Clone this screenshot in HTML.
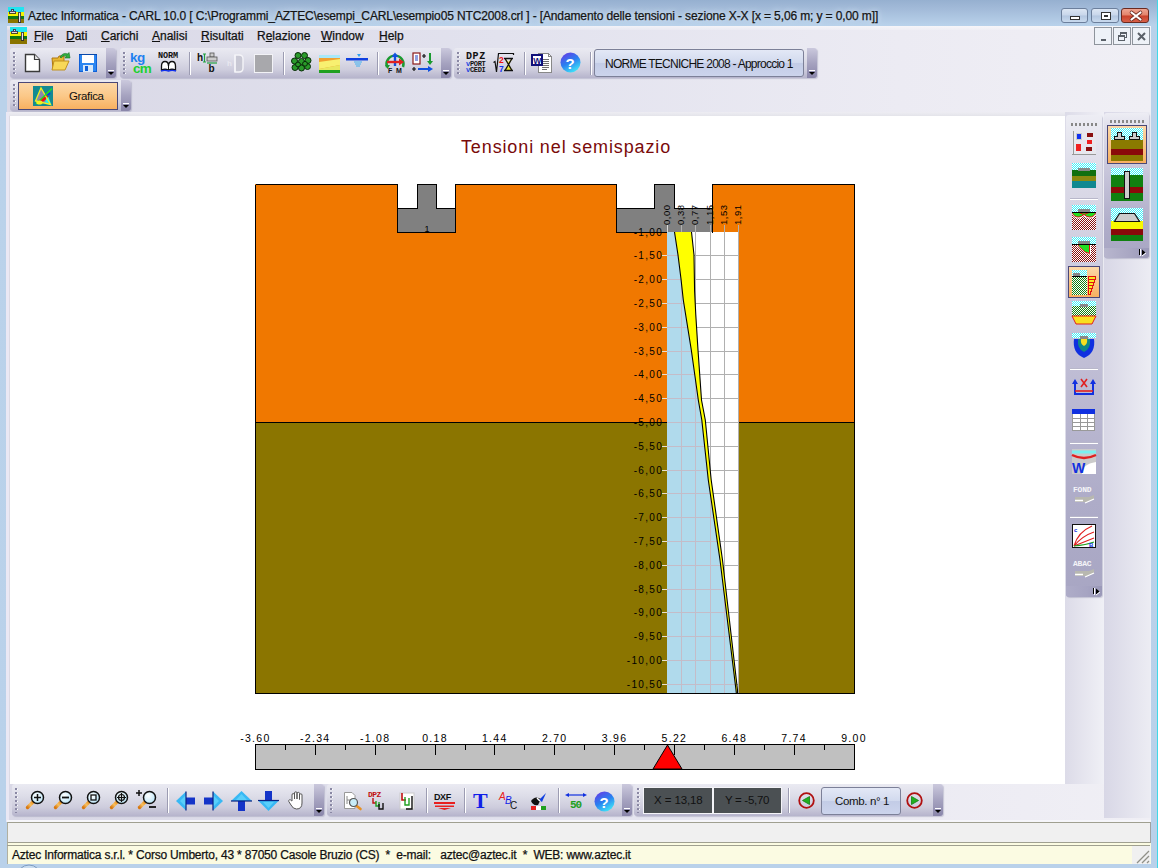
<!DOCTYPE html>
<html><head><meta charset="utf-8">
<style>
*{margin:0;padding:0;box-sizing:border-box}
html,body{width:1158px;height:868px;overflow:hidden;background:#B9D1EA;font-family:"Liberation Sans",sans-serif}
.a{position:absolute}
#frame{position:absolute;left:0;top:0;width:1158px;height:868px;background:linear-gradient(to bottom,#96B0D0 0px,#A4BCDA 10px,#B8D1EA 25px,#BAD2EA 100px,#B9D1EA 868px)}#frame:after{content:"";position:absolute;right:0;top:0;width:1px;height:868px;background:#40D8E8}
#client{position:absolute;left:7px;top:26px;width:1144px;height:838px;background:linear-gradient(to right,#D9D8E6 0%,#E2E2EE 43%,#ECEBF3 78%,#F0EFF5 100%)}
.tb{position:absolute;border-radius:3px;background:linear-gradient(to bottom,#EAEAF2 0%,#DEDEE9 35%,#CECDDD 72%,#B6B4CC 100%);box-shadow:1px 1px 1px rgba(130,130,160,.35)}
.cap{position:absolute;top:0;bottom:0;width:10px;right:0;border-radius:0 3px 3px 0;background:linear-gradient(to bottom,#CBC9DD 0%,#A6A3C0 50%,#8A86AA 100%)}
.cap i{position:absolute;left:2px;bottom:7px;width:6px;height:1px;background:#fff}
.cap b{position:absolute;left:2px;bottom:3px;width:0;height:0;border-left:3px solid transparent;border-right:3px solid transparent;border-top:3px solid #000}
.grip{position:absolute;left:3px;top:4px;width:3px;bottom:3px;background:repeating-linear-gradient(to bottom,#8A88A4 0 2px,transparent 2px 4px) 0 0/2px 100% no-repeat}.grip:after{content:"";position:absolute;left:2px;top:1px;width:1px;bottom:0;background:repeating-linear-gradient(to bottom,#fff 0 1px,transparent 1px 4px)}
.sep{position:absolute;top:4px;bottom:3px;width:2px;background:linear-gradient(to right,#9C9CB2 0 1px,#fff 1px 2px)}
.t{position:absolute;white-space:nowrap;line-height:1}
svg{position:absolute;overflow:visible}
.mn{position:absolute;top:30px;font-size:12px;color:#111;white-space:nowrap;line-height:1;-webkit-text-stroke:0.25px #111}
.mn u{text-decoration:underline;text-underline-offset:1px}
.btn{position:absolute;border:1px solid #7C8098;border-radius:3px;background:linear-gradient(to bottom,#E3E8F6 0%,#D2DAEE 48%,#C3CCE6 52%,#CCD4EC 100%)}
</style></head>
<body>
<div id="frame"></div>
<!-- title icon -->
<svg style="left:8px;top:7px" width="16" height="16" viewBox="0 0 16 16" shape-rendering="crispEdges"><rect x="0" y="0" width="16" height="5" fill="#22E4F0"/><rect x="0" y="5" width="16" height="4" fill="#F4F400"/><rect x="0" y="9" width="16" height="3" fill="#107810"/><rect x="0" y="12" width="16" height="4" fill="#8A7400"/><rect x="3" y="2" width="2" height="2" fill="#E8D8E0" stroke="#223" stroke-width=".8"/><rect x="1.5" y="4" width="6" height="2" fill="#E8D8E0" stroke="#223" stroke-width=".8"/><rect x="10.5" y="5" width="2" height="10" fill="#E8E0F0" stroke="#223" stroke-width=".8"/></svg>
<div class="t" style="left:28px;top:10px;font-size:12px;letter-spacing:-0.12px;color:#151515;-webkit-text-stroke:0.25px #151515;text-shadow:0 0 5px #D8E6F4,0 0 8px #D0E0F2">Aztec Informatica - CARL 10.0 [ C:\Programmi_AZTEC\esempi_CARL\esempio05 NTC2008.crl ] - [Andamento delle tensioni - sezione X-X [x = 5,06 m; y = 0,00 m]]</div>
<!-- caption buttons -->
<div class="a" style="left:1061px;top:8px;width:27px;height:15px;border:1px solid #6C7F9C;border-radius:3px;background:linear-gradient(to bottom,#DCE6F4 0%,#C8D6EA 48%,#B3C6E0 52%,#C9DAEE 100%)"><div class="a" style="left:8px;top:7px;width:10px;height:4px;background:#fff;border:1px solid #333"></div></div>
<div class="a" style="left:1091px;top:8px;width:28px;height:15px;border:1px solid #6C7F9C;border-radius:3px;background:linear-gradient(to bottom,#DCE6F4 0%,#C8D6EA 48%,#B3C6E0 52%,#C9DAEE 100%)"><div class="a" style="left:9px;top:3px;width:10px;height:8px;background:#fff;border:1px solid #333"><div class="a" style="left:2px;top:2px;width:4px;height:2px;background:#333"></div></div></div>
<div class="a" style="left:1121px;top:8px;width:28px;height:15px;border:1px solid #6A2A20;border-radius:3px;background:linear-gradient(to bottom,#EEA592 0%,#E3826A 48%,#C9412A 52%,#D8614A 100%)"><svg style="left:8px;top:2px" width="12" height="10" viewBox="0 0 12 10"><path d="M1.5 1.5 L10.5 8.5 M10.5 1.5 L1.5 8.5" stroke="#6b2a20" stroke-width="3.6" stroke-linecap="round"/><path d="M1.5 1.5 L10.5 8.5 M10.5 1.5 L1.5 8.5" stroke="#fff" stroke-width="2.2" stroke-linecap="round"/></svg></div>
<div id="client"></div>
<!-- menubar -->
<div class="a" style="left:7px;top:26px;width:1144px;height:4px;background:linear-gradient(to bottom,rgba(255,255,255,.5),rgba(255,255,255,.15))"></div>
<svg style="left:10px;top:27px" width="17" height="17" viewBox="0 0 17 17" shape-rendering="crispEdges"><rect x="0" y="0" width="17" height="5" fill="#22E4F0"/><rect x="0" y="5" width="17" height="4" fill="#F4F400"/><rect x="0" y="9" width="17" height="3" fill="#107810"/><rect x="0" y="12" width="17" height="5" fill="#8A7400"/><rect x="3.5" y="2" width="2" height="2" fill="#E8D8E0" stroke="#223" stroke-width=".8"/><rect x="1" y="4" width="6" height="2" fill="#E8D8E0" stroke="#223" stroke-width=".8"/><rect x="11" y="5" width="2" height="8" fill="#E8E0F0" stroke="#223" stroke-width=".8"/></svg>
<div class="mn" style="left:34px"><u>F</u>ile</div>
<div class="mn" style="left:66px"><u>D</u>ati</div>
<div class="mn" style="left:101px"><u>C</u>arichi</div>
<div class="mn" style="left:152px"><u>A</u>nalisi</div>
<div class="mn" style="left:201px"><u>R</u>isultati</div>
<div class="mn" style="left:257px">R<u>e</u>lazione</div>
<div class="mn" style="left:321px"><u>W</u>indow</div>
<div class="mn" style="left:379px"><u>H</u>elp</div>
<!-- MDI buttons -->
<div class="a" style="left:1094px;top:27px;width:18px;height:18px;border:1px solid #8E949C;background:#EEF2F8"><div class="a" style="left:6px;top:11px;width:5px;height:2px;background:#5A6068"></div></div>
<div class="a" style="left:1113px;top:27px;width:18px;height:18px;border:1px solid #8E949C;background:#EEF2F8"><div class="a" style="left:6px;top:4px;width:7px;height:6px;border:1px solid #5A6068;border-top-width:2px"></div><div class="a" style="left:4px;top:7px;width:7px;height:6px;border:1px solid #5A6068;border-top-width:2px;background:#EEF2F8"></div></div>
<div class="a" style="left:1132px;top:27px;width:18px;height:18px;border:1px solid #8E949C;background:#EEF2F8"><svg style="left:4px;top:4px" width="9" height="9" viewBox="0 0 9 9"><path d="M1 1L8 8M8 1L1 8" stroke="#5A6068" stroke-width="2"/></svg></div>
<!-- toolbar 1a -->
<div class="tb" style="left:10px;top:48px;width:106px;height:30px"><div class="grip"></div><div class="cap"><i></i><b></b></div></div>
<svg style="left:24px;top:53px" width="17" height="20" viewBox="0 0 17 20"><path d="M1.5 1.5H10.5L15.5 6.5V18.5H1.5Z" fill="#fff" stroke="#3a3a3a" stroke-width="1.4"/><path d="M10.5 1.5V6.5H15.5" fill="#e8e8e8" stroke="#3a3a3a" stroke-width="1.2"/></svg>
<svg style="left:51px;top:52px" width="20" height="20" viewBox="0 0 20 20"><path d="M1 6H7L8 4H13V17H2Z" fill="#E8B830" stroke="#B07810" stroke-width="1"/><path d="M3 9H18L14 18H1Z" fill="#F8D858" stroke="#C09020" stroke-width="1"/><path d="M9 5Q12 0 17 2L18 0.5L19 6L14 6L15.5 4Q12 3 10 6Z" fill="#30B040" stroke="#107020" stroke-width=".6"/></svg>
<svg style="left:79px;top:54px" width="18" height="18" viewBox="0 0 18 18" shape-rendering="crispEdges"><rect x="0" y="0" width="18" height="18" fill="#1060D8"/><rect x="1" y="1" width="16" height="16" fill="#2C86F0"/><rect x="3" y="1" width="12" height="8" fill="#fff"/><rect x="4" y="11" width="10" height="7" fill="#D8E8F8"/><rect x="6" y="12" width="3" height="5" fill="#1060D8"/><rect x="0" y="0" width="18" height="1" fill="#0A48A8"/></svg>
<!-- toolbar 1b -->
<div class="tb" style="left:120px;top:48px;width:331px;height:30px"><div class="grip"></div><div class="sep" style="left:69px"></div><div class="sep" style="left:163px"></div><div class="sep" style="left:257px"></div><div class="cap"><i></i><b></b></div></div>
<div class="t" style="left:130px;top:51px;font-size:13.5px;font-weight:bold;color:#1E80F0;letter-spacing:-.6px">kg</div>
<div class="t" style="left:133px;top:62px;font-size:13.5px;font-weight:bold;color:#20D030;letter-spacing:-.8px">cm</div>
<div class="t" style="left:158px;top:52px;font-family:'Liberation Mono';font-weight:bold;font-size:8.5px;color:#111;letter-spacing:-.1px">NORM</div>
<svg style="left:160px;top:60px" width="17" height="12" viewBox="0 0 17 12"><path d="M1.5 10V6Q1.5 1.5 5 1.5Q8.5 1.5 8.5 6Q8.5 1.5 12 1.5Q15.5 1.5 15.5 6V10Q12 8.5 8.5 10Q5 8.5 1.5 10Z" fill="#fff" stroke="#111" stroke-width="1.3"/><path d="M8.5 6V10" stroke="#111"/><path d="M1 11Q5 9.8 8.5 11Q12 9.8 16 11" stroke="#1030F0" stroke-width="1.4" fill="none"/></svg>
<svg style="left:197px;top:52px" width="21" height="21" viewBox="0 0 21 21"><text x="0" y="9" font-family="Liberation Sans" font-weight="bold" font-size="10" fill="#111">h</text><path d="M7.5 2V10M6 2H9M6 10H9" stroke="#20A040" stroke-width="1.2"/><rect x="13" y="1" width="4" height="4" fill="#ccc" stroke="#555" stroke-width=".8"/><rect x="10" y="5" width="10" height="4" fill="#ccc" stroke="#555" stroke-width=".8"/><path d="M10 11H20" stroke="#20A040" stroke-width="1.2"/><text x="11.5" y="20" font-family="Liberation Sans" font-weight="bold" font-size="10" fill="#111">b</text></svg>
<svg style="left:227px;top:53px" width="19" height="20" viewBox="0 0 19 20"><text x="0" y="13" font-family="Liberation Sans" font-weight="bold" font-size="8" fill="#e8e8f0">h</text><path d="M8 2H12Q16 2 16 6V15Q16 19 12 19H8Z" fill="#c8c8d4" stroke="#f4f4f8" stroke-width="1.4"/><path d="M8 2V19" stroke="#f4f4f8" stroke-width="1.4"/></svg>
<div class="a" style="left:254px;top:54px;width:19px;height:19px;background:#A8A8AC;border:1px solid #F2F2F6"></div>
<svg style="left:291px;top:52px" width="21" height="21" viewBox="0 0 21 21"><g fill="#2A9A2A" stroke="#062A06" stroke-width="1"><circle cx="7" cy="3.5" r="3"/><circle cx="13.5" cy="3.5" r="3"/><circle cx="3.5" cy="9" r="3"/><circle cx="10.5" cy="9.5" r="3"/><circle cx="17" cy="8.5" r="3"/><circle cx="4" cy="15.5" r="3"/><circle cx="10.5" cy="16" r="3"/><circle cx="16.5" cy="14.5" r="3"/><circle cx="7" cy="12.5" r="2.4"/><circle cx="14" cy="11.8" r="2.4"/></g></svg>
<svg style="left:319px;top:55px" width="21" height="18" viewBox="0 0 21 18" shape-rendering="crispEdges"><rect x="0" y="0" width="21" height="18" fill="#F0A030"/><rect x="0" y="0" width="21" height="3" fill="#A8E8F8"/><path d="M0 7L21 4V10L0 14Z" fill="#F8F070" shape-rendering="auto"/><path d="M0 14L21 10V15L0 15Z" fill="#E8E860" shape-rendering="auto"/><rect x="0" y="15" width="21" height="3" fill="#20A020"/></svg>
<svg style="left:346px;top:54px" width="22" height="14" viewBox="0 0 22 14"><path d="M11 0L15 0L13 3Z" fill="#30A0F0"/><rect x="0" y="4" width="22" height="2.5" fill="#1040E0"/><path d="M8 8H16M9 10H15M10 12H14" stroke="#40B0F0" stroke-width="1.2"/></svg>
<svg style="left:384px;top:52px" width="22" height="21" viewBox="0 0 22 21"><path d="M3 15A8.5 8.5 0 1 1 19 15" fill="none" stroke="#1A9A30" stroke-width="2.4"/><path d="M1 13L3.5 17L6 13" fill="#1A9A30"/><path d="M11 2V14" stroke="#1050E0" stroke-width="2.4"/><path d="M7.5 5L11 0.5L14.5 5Z" fill="#1050E0"/><path d="M3 10H16" stroke="#E02020" stroke-width="2.4"/><path d="M15 6.5L20 10L15 13.5Z" fill="#E02020"/><text x="4" y="21" font-family="Liberation Sans" font-weight="bold" font-size="7" fill="#111">F</text><text x="12" y="21" font-family="Liberation Sans" font-weight="bold" font-size="7" fill="#111">M</text></svg>
<svg style="left:412px;top:52px" width="22" height="21" viewBox="0 0 22 21"><rect x="1" y="1" width="7" height="11" fill="#fff" stroke="#8A1A1A" stroke-width="1.2"/><path d="M3 4H6M3 6H6M3 8H6" stroke="#2040C0"/><path d="M10 4H14M12 2V6" stroke="#111" stroke-width="1.2"/><path d="M18 1V11" stroke="#1A9A30" stroke-width="2"/><path d="M15 9L18 13L21 9Z" fill="#1A9A30"/><path d="M0 17H4M2 15V19" stroke="#111" stroke-width="1.2"/><path d="M6 17H17" stroke="#1050E0" stroke-width="2"/><path d="M16 14L21 17L16 20Z" fill="#1050E0"/></svg>
<!-- toolbar 1c -->
<div class="tb" style="left:454px;top:48px;width:363px;height:30px"><div class="grip"></div><div class="sep" style="left:70px"></div><div class="sep" style="left:136px"></div><div class="cap"><i></i><b></b></div></div>
<div class="t" style="left:466px;top:52px;font-family:'Liberation Mono';font-weight:bold;font-size:10px;color:#111;letter-spacing:.6px">DPZ</div>
<div class="t" style="left:466px;top:61px;font-family:'Liberation Mono';font-weight:bold;font-size:7px;color:#111;letter-spacing:-.3px"><span style="color:#2040E0">v</span>PORT</div>
<div class="t" style="left:466px;top:67px;font-family:'Liberation Mono';font-weight:bold;font-size:7px;color:#111;letter-spacing:-.3px"><span style="color:#2040E0">v</span>CEDI</div>
<svg style="left:493px;top:52px" width="22" height="21" viewBox="0 0 22 21"><path d="M0.5 10.5L2 9.5L3.5 20L5.5 1.5H20.5V3" fill="none" stroke="#111" stroke-width="1.2"/><text x="6" y="11" font-family="Liberation Sans" font-weight="bold" font-size="8.5" fill="#F01010">2</text><text x="6" y="19.5" font-family="Liberation Sans" font-weight="bold" font-size="8.5" fill="#1030F0">7</text><path d="M11.5 6.5H19.5L16 12.5L19.5 18.5H11.5L15 12.5Z" fill="#F0E830"/><path d="M12.5 6.5H18.5L15.5 10Z" fill="#E0E0E8"/><path d="M11 6.5H20M11 18.5H20M12 6.5L19 18.5M19 6.5L12 18.5" stroke="#111" stroke-width="1.3"/></svg>
<svg style="left:531px;top:52px" width="22" height="21" viewBox="0 0 22 21" shape-rendering="crispEdges"><path d="M7.5 1.5H17.5L20.5 4.5V20.5H7.5Z" fill="#fff" stroke="#888" stroke-width="1"/><path d="M17.5 1.5V4.5H20.5" fill="none" stroke="#888"/><path d="M11 7.5H18M11 9.5H18M11 11.5H18M11 13.5H18M11 15.5H18M11 17.5H16" stroke="#707070"/><rect x="1" y="3" width="10" height="10" fill="#fff" stroke="#10107A" stroke-width="1.6"/><text x="2.2" y="11.5" font-family="Liberation Sans" font-weight="bold" font-size="8.5" fill="#10107A" shape-rendering="auto">W</text></svg>
<svg style="left:560px;top:52px" width="21" height="21" viewBox="0 0 21 21"><defs><linearGradient id="hg" x1=".2" y1=".1" x2=".7" y2="1"><stop offset="0" stop-color="#5A48E8"/><stop offset=".45" stop-color="#2A80F0"/><stop offset="1" stop-color="#40E8F8"/></linearGradient></defs><circle cx="10.5" cy="10.5" r="10" fill="url(#hg)"/><text x="5.5" y="16.5" font-family="Liberation Sans" font-weight="bold" font-size="15" fill="#fff">?</text></svg>
<div class="btn" style="left:594px;top:49px;width:210px;height:28px"></div>
<div class="t" style="left:605px;top:58px;font-size:12px;letter-spacing:-0.75px;color:#111">NORME TECNICHE 2008 - Approccio 1</div>
<!-- toolbar 2 -->
<div class="tb" style="left:10px;top:80px;width:121px;height:31px"><div class="grip"></div><div class="cap"><i></i><b></b></div></div>
<div class="a" style="left:18px;top:82px;width:100px;height:28px;border:1px solid #4A4878;background:linear-gradient(to bottom,#FCD8A8 0%,#FBC888 50%,#F8B060 100%)"></div>
<svg style="left:33px;top:86px" width="20" height="20" viewBox="0 0 20 20"><rect x="0" y="0" width="20" height="20" fill="#138A92"/><path d="M8 2L2.5 15L17.5 18.5Z" fill="#8A88AC"/><path d="M5 15L13.5 9L15.5 11.5L9 16.5Z" fill="#F01010"/><path d="M13.5 12L15.5 11L18 18L12 17Z" fill="#20F0F0"/><path d="M8 2L2.5 15L17.5 18.5Z" fill="none" stroke="#F0F020" stroke-width="1.3"/><path d="M3 18L19 2.5" stroke="#20E020" stroke-width="1.4"/><path d="M14 8.5L17 6.5L17.5 8L15 9.5Z" fill="#1030F0"/><ellipse cx="6.5" cy="16.5" rx="3.2" ry="2" fill="#F0F020"/></svg>
<div class="t" style="left:69px;top:91px;font-size:11.5px;letter-spacing:-0.35px;color:#111">Grafica</div>
<div class="a" style="left:10px;top:116px;width:1055px;height:668px;background:#fff"></div>
<div class="a" style="left:9px;top:112px;width:1056px;height:4px;background:linear-gradient(to bottom,#EEEDF3,#E4E4EA)"></div>
<div class="a" style="left:6px;top:112px;width:3px;height:710px;background:#EAE8F4"></div>
<div class="a" style="left:9px;top:116px;width:1px;height:668px;background:#DCDAE4"></div>
<div class="t" style="left:461px;top:138px;font-size:18px;color:#7A0A0A;letter-spacing:0.87px">Tensioni nel semispazio</div>
<svg style="left:0;top:0" width="1158" height="868" viewBox="0 0 1158 868"><rect x="255" y="184" width="600" height="238" fill="#F07800"/><rect x="255" y="422" width="600" height="272" fill="#8B7500"/><rect x="397" y="184" width="58" height="48" fill="#fff"/><path d="M397 208H417V184H436V208H455V232H397Z" fill="#808080"/><rect x="616" y="184" width="96" height="48" fill="#fff"/><path d="M616 208H654V184H674V208H712V232H616Z" fill="#808080"/><rect x="667" y="232" width="72" height="462" fill="#fff"/><line x1="681.5" y1="225" x2="681.5" y2="694" stroke="#B0B0B0" stroke-width="1"/><line x1="695.5" y1="225" x2="695.5" y2="694" stroke="#B0B0B0" stroke-width="1"/><line x1="710.5" y1="225" x2="710.5" y2="694" stroke="#B0B0B0" stroke-width="1"/><line x1="724.5" y1="225" x2="724.5" y2="694" stroke="#B0B0B0" stroke-width="1"/><line x1="738.5" y1="225" x2="738.5" y2="694" stroke="#B0B0B0" stroke-width="1"/><line x1="667.5" y1="225" x2="667.5" y2="232" stroke="#D8D8D8" stroke-width="1"/><line x1="662" y1="255.5" x2="667" y2="255.5" stroke="#E8E0D0" stroke-width="1"/><line x1="667" y1="255.5" x2="739" y2="255.5" stroke="#B0B0B0" stroke-width="1"/><line x1="662" y1="279.5" x2="667" y2="279.5" stroke="#E8E0D0" stroke-width="1"/><line x1="667" y1="279.5" x2="739" y2="279.5" stroke="#B0B0B0" stroke-width="1"/><line x1="662" y1="303.5" x2="667" y2="303.5" stroke="#E8E0D0" stroke-width="1"/><line x1="667" y1="303.5" x2="739" y2="303.5" stroke="#B0B0B0" stroke-width="1"/><line x1="662" y1="327.5" x2="667" y2="327.5" stroke="#E8E0D0" stroke-width="1"/><line x1="667" y1="327.5" x2="739" y2="327.5" stroke="#B0B0B0" stroke-width="1"/><line x1="662" y1="351.5" x2="667" y2="351.5" stroke="#E8E0D0" stroke-width="1"/><line x1="667" y1="351.5" x2="739" y2="351.5" stroke="#B0B0B0" stroke-width="1"/><line x1="662" y1="374.5" x2="667" y2="374.5" stroke="#E8E0D0" stroke-width="1"/><line x1="667" y1="374.5" x2="739" y2="374.5" stroke="#B0B0B0" stroke-width="1"/><line x1="662" y1="398.5" x2="667" y2="398.5" stroke="#E8E0D0" stroke-width="1"/><line x1="667" y1="398.5" x2="739" y2="398.5" stroke="#B0B0B0" stroke-width="1"/><line x1="662" y1="422.5" x2="667" y2="422.5" stroke="#E8E0D0" stroke-width="1"/><line x1="667" y1="422.5" x2="739" y2="422.5" stroke="#B0B0B0" stroke-width="1"/><line x1="662" y1="446.5" x2="667" y2="446.5" stroke="#E8E0D0" stroke-width="1"/><line x1="667" y1="446.5" x2="739" y2="446.5" stroke="#B0B0B0" stroke-width="1"/><line x1="662" y1="470.5" x2="667" y2="470.5" stroke="#E8E0D0" stroke-width="1"/><line x1="667" y1="470.5" x2="739" y2="470.5" stroke="#B0B0B0" stroke-width="1"/><line x1="662" y1="493.5" x2="667" y2="493.5" stroke="#E8E0D0" stroke-width="1"/><line x1="667" y1="493.5" x2="739" y2="493.5" stroke="#B0B0B0" stroke-width="1"/><line x1="662" y1="517.5" x2="667" y2="517.5" stroke="#E8E0D0" stroke-width="1"/><line x1="667" y1="517.5" x2="739" y2="517.5" stroke="#B0B0B0" stroke-width="1"/><line x1="662" y1="541.5" x2="667" y2="541.5" stroke="#E8E0D0" stroke-width="1"/><line x1="667" y1="541.5" x2="739" y2="541.5" stroke="#B0B0B0" stroke-width="1"/><line x1="662" y1="565.5" x2="667" y2="565.5" stroke="#E8E0D0" stroke-width="1"/><line x1="667" y1="565.5" x2="739" y2="565.5" stroke="#B0B0B0" stroke-width="1"/><line x1="662" y1="589.5" x2="667" y2="589.5" stroke="#E8E0D0" stroke-width="1"/><line x1="667" y1="589.5" x2="739" y2="589.5" stroke="#B0B0B0" stroke-width="1"/><line x1="662" y1="612.5" x2="667" y2="612.5" stroke="#E8E0D0" stroke-width="1"/><line x1="667" y1="612.5" x2="739" y2="612.5" stroke="#B0B0B0" stroke-width="1"/><line x1="662" y1="636.5" x2="667" y2="636.5" stroke="#E8E0D0" stroke-width="1"/><line x1="667" y1="636.5" x2="739" y2="636.5" stroke="#B0B0B0" stroke-width="1"/><line x1="662" y1="660.5" x2="667" y2="660.5" stroke="#E8E0D0" stroke-width="1"/><line x1="667" y1="660.5" x2="739" y2="660.5" stroke="#B0B0B0" stroke-width="1"/><line x1="662" y1="684.5" x2="667" y2="684.5" stroke="#E8E0D0" stroke-width="1"/><line x1="667" y1="684.5" x2="739" y2="684.5" stroke="#B0B0B0" stroke-width="1"/><polygon points="667,232 674.5,232 678,255 681,279 683.3,300 691.3,350 698.3,400 701.8,420 708.3,480 720,560 736,690 736.4,694 667,694" fill="#B0DAEC"/><polygon points="674.5,232 678,255 681,279 683.3,300 691.3,350 698.3,400 701.8,420 708.3,480 720,560 736,690 736.4,694 737.6,694 737.5,690 722.5,560 711.2,480 705.3,420 701.5,400 698,350 695.8,315 694.6,291 694,255 691.5,232" fill="#FFFF00"/><clipPath id="cb"><polygon points="667,232 674.5,232 678,255 681,279 683.3,300 691.3,350 698.3,400 701.8,420 708.3,480 720,560 736,690 736.4,694 667,694"/></clipPath><g clip-path="url(#cb)" stroke="#C4BCC8" stroke-width="1"><line x1="681.5" y1="232" x2="681.5" y2="694"/><line x1="695.5" y1="232" x2="695.5" y2="694"/><line x1="710.5" y1="232" x2="710.5" y2="694"/><line x1="724.5" y1="232" x2="724.5" y2="694"/><line x1="738.5" y1="232" x2="738.5" y2="694"/><line x1="667" y1="255.5" x2="739" y2="255.5"/><line x1="667" y1="279.5" x2="739" y2="279.5"/><line x1="667" y1="303.5" x2="739" y2="303.5"/><line x1="667" y1="327.5" x2="739" y2="327.5"/><line x1="667" y1="351.5" x2="739" y2="351.5"/><line x1="667" y1="374.5" x2="739" y2="374.5"/><line x1="667" y1="398.5" x2="739" y2="398.5"/><line x1="667" y1="422.5" x2="739" y2="422.5"/><line x1="667" y1="446.5" x2="739" y2="446.5"/><line x1="667" y1="470.5" x2="739" y2="470.5"/><line x1="667" y1="493.5" x2="739" y2="493.5"/><line x1="667" y1="517.5" x2="739" y2="517.5"/><line x1="667" y1="541.5" x2="739" y2="541.5"/><line x1="667" y1="565.5" x2="739" y2="565.5"/><line x1="667" y1="589.5" x2="739" y2="589.5"/><line x1="667" y1="612.5" x2="739" y2="612.5"/><line x1="667" y1="636.5" x2="739" y2="636.5"/><line x1="667" y1="660.5" x2="739" y2="660.5"/><line x1="667" y1="684.5" x2="739" y2="684.5"/></g><polyline points="674.5,232 678,255 681,279 683.3,300 691.3,350 698.3,400 701.8,420 708.3,480 720,560 736,690 736.4,694" fill="none" stroke="#000" stroke-width="1.1"/><polyline points="691.5,232 694,255 694.6,291 695.8,315 698,350 701.5,400 705.3,420 711.2,480 722.5,560 737.5,690 737.6,694" fill="none" stroke="#000" stroke-width="1.1"/><g fill="none" stroke="#000" stroke-width="1" shape-rendering="crispEdges"><path d="M255.5 184.5H397.5V232.5H455.5V184.5H616.5V232.5H667"/><path d="M712.5 232.5V184.5H854.5V693.5H255.5V184.5"/><path d="M397.5 208.5H417.5V184.5H436.5V208.5H455.5"/><path d="M616.5 208.5H654.5V184.5H674.5V208.5H712.5"/><path d="M255.5 422.5H667M739 422.5H854.5"/></g><text x="663" y="236" text-anchor="end" font-family="Liberation Sans" font-size="10" fill="#000" letter-spacing="1.3">-1,00</text><text x="663" y="259" text-anchor="end" font-family="Liberation Sans" font-size="10" fill="#000" letter-spacing="1.3">-1,50</text><text x="663" y="283" text-anchor="end" font-family="Liberation Sans" font-size="10" fill="#000" letter-spacing="1.3">-2,00</text><text x="663" y="307" text-anchor="end" font-family="Liberation Sans" font-size="10" fill="#000" letter-spacing="1.3">-2,50</text><text x="663" y="331" text-anchor="end" font-family="Liberation Sans" font-size="10" fill="#000" letter-spacing="1.3">-3,00</text><text x="663" y="355" text-anchor="end" font-family="Liberation Sans" font-size="10" fill="#000" letter-spacing="1.3">-3,50</text><text x="663" y="378" text-anchor="end" font-family="Liberation Sans" font-size="10" fill="#000" letter-spacing="1.3">-4,00</text><text x="663" y="402" text-anchor="end" font-family="Liberation Sans" font-size="10" fill="#000" letter-spacing="1.3">-4,50</text><text x="663" y="426" text-anchor="end" font-family="Liberation Sans" font-size="10" fill="#000" letter-spacing="1.3">-5,00</text><text x="663" y="450" text-anchor="end" font-family="Liberation Sans" font-size="10" fill="#000" letter-spacing="1.3">-5,50</text><text x="663" y="474" text-anchor="end" font-family="Liberation Sans" font-size="10" fill="#000" letter-spacing="1.3">-6,00</text><text x="663" y="497" text-anchor="end" font-family="Liberation Sans" font-size="10" fill="#000" letter-spacing="1.3">-6,50</text><text x="663" y="521" text-anchor="end" font-family="Liberation Sans" font-size="10" fill="#000" letter-spacing="1.3">-7,00</text><text x="663" y="545" text-anchor="end" font-family="Liberation Sans" font-size="10" fill="#000" letter-spacing="1.3">-7,50</text><text x="663" y="569" text-anchor="end" font-family="Liberation Sans" font-size="10" fill="#000" letter-spacing="1.3">-8,00</text><text x="663" y="593" text-anchor="end" font-family="Liberation Sans" font-size="10" fill="#000" letter-spacing="1.3">-8,50</text><text x="663" y="616" text-anchor="end" font-family="Liberation Sans" font-size="10" fill="#000" letter-spacing="1.3">-9,00</text><text x="663" y="640" text-anchor="end" font-family="Liberation Sans" font-size="10" fill="#000" letter-spacing="1.3">-9,50</text><text x="663" y="664" text-anchor="end" font-family="Liberation Sans" font-size="10" fill="#000" letter-spacing="1.3">-10,00</text><text x="663" y="688" text-anchor="end" font-family="Liberation Sans" font-size="10" fill="#000" letter-spacing="1.3">-10,50</text><text transform="translate(669.8,225) rotate(-90)" font-family="Liberation Sans" font-size="9.5" fill="#000" letter-spacing="0.55">0,00</text><text transform="translate(683.8,225) rotate(-90)" font-family="Liberation Sans" font-size="9.5" fill="#000" letter-spacing="0.55">0,38</text><text transform="translate(697.8,225) rotate(-90)" font-family="Liberation Sans" font-size="9.5" fill="#000" letter-spacing="0.55">0,77</text><text transform="translate(712.8,225) rotate(-90)" font-family="Liberation Sans" font-size="9.5" fill="#000" letter-spacing="0.55">1,15</text><text transform="translate(726.8,225) rotate(-90)" font-family="Liberation Sans" font-size="9.5" fill="#000" letter-spacing="0.55">1,53</text><text transform="translate(740.8,225) rotate(-90)" font-family="Liberation Sans" font-size="9.5" fill="#000" letter-spacing="0.55">1,91</text><text x="427" y="232" text-anchor="middle" font-family="Liberation Sans" font-size="9" fill="#000">1</text><rect x="255.5" y="744.5" width="599" height="25" fill="#C0C0C0" stroke="#000" stroke-width="1"/><line x1="285.5" y1="745" x2="285.5" y2="750" stroke="#000"/><line x1="315.5" y1="745" x2="315.5" y2="755" stroke="#000"/><line x1="345.5" y1="745" x2="345.5" y2="750" stroke="#000"/><line x1="375.5" y1="745" x2="375.5" y2="755" stroke="#000"/><line x1="405.5" y1="745" x2="405.5" y2="750" stroke="#000"/><line x1="435.5" y1="745" x2="435.5" y2="755" stroke="#000"/><line x1="465.5" y1="745" x2="465.5" y2="750" stroke="#000"/><line x1="494.5" y1="745" x2="494.5" y2="755" stroke="#000"/><line x1="524.5" y1="745" x2="524.5" y2="750" stroke="#000"/><line x1="554.5" y1="745" x2="554.5" y2="755" stroke="#000"/><line x1="584.5" y1="745" x2="584.5" y2="750" stroke="#000"/><line x1="614.5" y1="745" x2="614.5" y2="755" stroke="#000"/><line x1="644.5" y1="745" x2="644.5" y2="750" stroke="#000"/><line x1="674.5" y1="745" x2="674.5" y2="755" stroke="#000"/><line x1="704.5" y1="745" x2="704.5" y2="750" stroke="#000"/><line x1="734.5" y1="745" x2="734.5" y2="755" stroke="#000"/><line x1="764.5" y1="745" x2="764.5" y2="750" stroke="#000"/><line x1="794.5" y1="745" x2="794.5" y2="755" stroke="#000"/><line x1="824.5" y1="745" x2="824.5" y2="750" stroke="#000"/><text x="255.4" y="742" text-anchor="middle" font-family="Liberation Sans" font-size="10.5" fill="#000" letter-spacing="1.3">-3.60</text><text x="315.3" y="742" text-anchor="middle" font-family="Liberation Sans" font-size="10.5" fill="#000" letter-spacing="1.3">-2.34</text><text x="375.1" y="742" text-anchor="middle" font-family="Liberation Sans" font-size="10.5" fill="#000" letter-spacing="1.3">-1.08</text><text x="435.0" y="742" text-anchor="middle" font-family="Liberation Sans" font-size="10.5" fill="#000" letter-spacing="1.3">0.18</text><text x="494.8" y="742" text-anchor="middle" font-family="Liberation Sans" font-size="10.5" fill="#000" letter-spacing="1.3">1.44</text><text x="554.7" y="742" text-anchor="middle" font-family="Liberation Sans" font-size="10.5" fill="#000" letter-spacing="1.3">2.70</text><text x="614.6" y="742" text-anchor="middle" font-family="Liberation Sans" font-size="10.5" fill="#000" letter-spacing="1.3">3.96</text><text x="674.4" y="742" text-anchor="middle" font-family="Liberation Sans" font-size="10.5" fill="#000" letter-spacing="1.3">5.22</text><text x="734.3" y="742" text-anchor="middle" font-family="Liberation Sans" font-size="10.5" fill="#000" letter-spacing="1.3">6.48</text><text x="794.1" y="742" text-anchor="middle" font-family="Liberation Sans" font-size="10.5" fill="#000" letter-spacing="1.3">7.74</text><text x="854.0" y="742" text-anchor="middle" font-family="Liberation Sans" font-size="10.5" fill="#000" letter-spacing="1.3">9.00</text><path d="M667.5 745L682 769H653Z" fill="#FF0000" stroke="#000" stroke-width="1"/></svg><!-- right docks -->
<svg style="left:0;top:0" width="1" height="1"><defs><pattern id="sky" width="2" height="2" patternUnits="userSpaceOnUse"><rect width="2" height="2" fill="#fff"/><rect width="1" height="1" fill="#40F0F8"/><rect x="1" y="1" width="1" height="1" fill="#40F0F8"/></pattern></defs></svg>

<div class="a" style="left:1065px;top:112px;width:39px;height:672px;background:linear-gradient(to right,#DCDBE8,#F0F0F6)"></div>
<div class="a" style="left:1104px;top:112px;width:46px;height:706px;background:linear-gradient(to right,#D8D7E6,#ECECF3)"></div>
<!-- left vertical toolbar -->
<div class="a" style="left:1066px;top:115px;width:36px;height:482px;border-radius:3px;background:linear-gradient(to bottom,#EDEDF4 0%,#DCDBE8 12%,#C4C2D8 45%,#AEACC8 80%,#A8A6C3 100%);box-shadow:1px 1px 1px rgba(130,130,160,.35)">
  <div class="a" style="left:5px;top:8px;width:26px;height:3px;background:repeating-linear-gradient(to right,#888 0 2px,transparent 2px 4px)"></div>
  <div class="a" style="left:4px;top:83px;width:28px;height:2px;background:linear-gradient(to bottom,#B8B7CA 0 1px,#fff 1px 2px)"></div>
  <div class="a" style="left:4px;top:253px;width:28px;height:2px;background:linear-gradient(to bottom,#B8B7CA 0 1px,#fff 1px 2px)"></div>
  <div class="a" style="left:4px;top:327px;width:28px;height:2px;background:linear-gradient(to bottom,#B8B7CA 0 1px,#fff 1px 2px)"></div>
  <div class="a" style="left:4px;top:401px;width:28px;height:2px;background:linear-gradient(to bottom,#B8B7CA 0 1px,#fff 1px 2px)"></div>
  <div class="a" style="left:0;bottom:0;width:36px;height:11px;border-radius:0 0 3px 3px;background:linear-gradient(to right,#AEACC8 0%,#A6A4C2 60%,#9A98B8 100%)"><svg style="left:27px;top:2px" width="8" height="8" viewBox="0 0 8 8"><path d="M0.5 0V6" stroke="#000"/><path d="M1.5 0V7" stroke="#fff"/><path d="M3 0.5L6.5 3.5L3 6.5Z" fill="#000"/><path d="M3 7L7 4" stroke="#fff"/></svg></div>
</div>
<div class="a" style="left:1068px;top:266px;width:32px;height:32px;border:1px solid #4A4878;background:linear-gradient(to bottom,#FCD8A8,#F8B060)"></div>
<!-- icons left toolbar -->
<svg style="left:1072px;top:131px" width="24" height="24" viewBox="0 0 24 24" shape-rendering="crispEdges"><rect x="0" y="0" width="24" height="24" fill="#E8E8EE"/><path d="M0 23H24M1 0V24" stroke="#999"/><rect x="4" y="2" width="5" height="6" fill="#1030F0" stroke="#ccc"/><rect x="15" y="2" width="6" height="4" fill="#8A1010"/><rect x="4" y="13" width="5" height="7" fill="#F02020"/><rect x="15" y="9" width="5" height="4" fill="#F02020"/><rect x="14" y="16" width="6" height="4" fill="#8A1010"/></svg>
<svg style="left:1072px;top:163px" width="24" height="25" viewBox="0 0 24 25" shape-rendering="crispEdges"><rect x="0" y="0" width="24" height="7" fill="url(#sky)"/><rect x="0" y="7" width="24" height="6" fill="#107010"/><rect x="0" y="13" width="24" height="5" fill="#8A8A10"/><rect x="0" y="18" width="24" height="7" fill="#108890"/><rect x="6" y="5" width="12" height="3" fill="#888"/></svg>
<svg style="left:1072px;top:205px" width="24" height="25" viewBox="0 0 24 25" shape-rendering="crispEdges"><defs><pattern id="chk" width="2" height="2" patternUnits="userSpaceOnUse"><rect width="2" height="2" fill="#fff"/><rect width="1" height="1" fill="#8A1010"/><rect x="1" y="1" width="1" height="1" fill="#8A1010"/></pattern><pattern id="chkg" width="2" height="2" patternUnits="userSpaceOnUse"><rect width="2" height="2" fill="#fff"/><rect width="1" height="1" fill="#108010"/><rect x="1" y="1" width="1" height="1" fill="#108010"/></pattern></defs><rect x="0" y="0" width="24" height="7" fill="url(#sky)"/><rect x="0" y="7" width="24" height="18" fill="url(#chk)"/><path d="M0 7H24V9Q21 15 15 13L12 11L9 13Q3 15 0 9Z" fill="#fff" shape-rendering="auto"/><path d="M0.5 7.5H23.5V8.5Q20.5 13.5 15 11.5L12 9.5L9 11.5Q3.5 13.5 0.5 8.5Z" fill="#20E020" stroke="#E01010" stroke-width="1" shape-rendering="auto"/><path d="M7 7.5L12 9.5L17 7.5" stroke="#E01010" fill="none" shape-rendering="auto"/><rect x="6" y="4" width="12" height="3" fill="#888"/><rect x="0" y="7" width="24" height="1" fill="#000"/></svg>
<svg style="left:1072px;top:237px" width="24" height="25" viewBox="0 0 24 25" shape-rendering="crispEdges"><rect x="0" y="0" width="24" height="7" fill="url(#sky)"/><rect x="0" y="7" width="24" height="18" fill="url(#chk)"/><path d="M5 7H19V18L13 16L5 9Z" fill="#fff" shape-rendering="auto"/><path d="M6.5 7.5H17.5V16.5L13 15L6.5 9Z" fill="#20E020" stroke="#E01010" stroke-width="1" shape-rendering="auto"/><rect x="6" y="4" width="12" height="3" fill="#888"/><rect x="0" y="7" width="24" height="1" fill="#000"/></svg>
<svg style="left:1072px;top:270px" width="25" height="25" viewBox="0 0 25 25" shape-rendering="crispEdges"><rect x="0" y="0" width="15" height="6" fill="url(#sky)"/><rect x="0" y="6" width="15" height="19" fill="url(#chkg)"/><rect x="1" y="3" width="7" height="3" fill="#888"/><rect x="0" y="6" width="15" height="1" fill="#000"/><path d="M16.5 6.5H23.5V9.5H22.5V12.5H21.5V15.5H20.5V18.5H19.5V21.5H18.5V24H16.5Z" fill="#F8E820" stroke="#E01010" stroke-width="1"/><path d="M17 9.5H22.5M17 12.5H21.5M17 15.5H20.5M17 18.5H19.5" stroke="#E01010"/></svg>
<svg style="left:1072px;top:301px" width="24" height="24" viewBox="0 0 24 24" shape-rendering="crispEdges"><rect x="0" y="0" width="24" height="5" fill="url(#sky)"/><rect x="0" y="5" width="24" height="10" fill="url(#chkg)"/><rect x="8" y="3" width="8" height="3" fill="#888"/><path d="M0 15H24L20 23H4Z" fill="#F8E020" stroke="#E02020" shape-rendering="auto"/></svg>
<svg style="left:1072px;top:333px" width="24" height="26" viewBox="0 0 24 26"><rect x="0" y="0" width="24" height="5" fill="url(#sky)"/><rect x="8" y="3" width="8" height="3" fill="#888"/><path d="M2 6H22Q24 20 12 25Q0 20 2 6Z" fill="#1030E0"/><path d="M6 6H18Q19 16 12 19Q5 16 6 6Z" fill="#108888"/><path d="M9 6H15Q16 11 12 13Q8 11 9 6Z" fill="#F8E020"/></svg>
<svg style="left:1072px;top:377px" width="24" height="20" viewBox="0 0 24 20"><path d="M3 5V17H21V5" fill="none" stroke="#1030E0" stroke-width="2"/><path d="M3 14H21" stroke="#E02020" stroke-width="1.6"/><path d="M0 7L3 2L6 7Z" fill="#1030E0"/><path d="M18 7L21 2L24 7Z" fill="#1030E0"/><path d="M9 2L15 10M15 2L9 10" stroke="#E02020" stroke-width="1.6"/></svg>
<svg style="left:1072px;top:409px" width="23" height="22" viewBox="0 0 23 22" shape-rendering="crispEdges"><rect x="0" y="0" width="23" height="22" fill="#fff"/><rect x="0" y="0" width="23" height="5" fill="#1030E0"/><path d="M0 9H23M0 13H23M0 17H23M0 21H23M0.5 5V22M8 5V22M15 5V22M22.5 5V22" stroke="#999"/></svg>
<svg style="left:1072px;top:449px" width="24" height="25" viewBox="0 0 24 25"><rect x="0" y="0" width="24" height="25" fill="#CACACA"/><path d="M0 3H24" stroke="#7AF0F0" stroke-width="3"/><path d="M0 6Q12 12 24 6" stroke="#E02020" stroke-width="2.4" fill="none"/><path d="M10 25Q10 15 24 13V25Z" fill="#fff"/><text x="0" y="24" font-family="Liberation Sans" font-weight="bold" font-size="14" fill="#1030E0">W</text></svg>
<div class="t" style="left:1073px;top:486px;font-family:'Liberation Mono';font-weight:bold;font-size:8px;color:#F4F4F8;letter-spacing:-.2px">FOND</div>
<svg style="left:1073px;top:494px" width="23" height="10" viewBox="0 0 23 10"><path d="M2 3H16L21 1V5L14 8H2Z" fill="#B8B8B0"/><path d="M2 6.5H10M12 9L21 5" stroke="#fff" stroke-width="1.3"/></svg>
<svg style="left:1072px;top:524px" width="24" height="24" viewBox="0 0 24 24"><rect x="0.5" y="0.5" width="23" height="23" fill="#fff" stroke="#111"/><path d="M2 22Q6 8 20 2M2 22Q10 12 22 8M2 22Q12 18 22 14" stroke="#E02020" fill="none" stroke-width="1.2"/><path d="M2 22Q14 21 22 18" stroke="#20A020" fill="none" stroke-width="1.2"/><text x="2" y="8" font-family="Liberation Sans" font-weight="bold" font-size="6" fill="#1030E0">c</text><text x="17" y="23" font-family="Liberation Sans" font-weight="bold" font-size="6" fill="#1030E0">B</text></svg>
<div class="t" style="left:1073px;top:560px;font-family:'Liberation Mono';font-weight:bold;font-size:8px;color:#F4F4F8;letter-spacing:-.2px">ABAC</div>
<svg style="left:1073px;top:568px" width="23" height="10" viewBox="0 0 23 10"><path d="M2 3H16L21 1V5L14 8H2Z" fill="#B8B8B0"/><path d="M2 6.5H10M12 9L21 5" stroke="#fff" stroke-width="1.3"/></svg>
<!-- right vertical toolbar -->
<div class="a" style="left:1104px;top:113px;width:45px;height:145px;border-radius:3px;background:linear-gradient(to bottom,#EDEDF4 0%,#DCDBE8 12%,#C4C2D8 45%,#AEACC8 80%,#A8A6C3 100%);box-shadow:1px 1px 1px rgba(130,130,160,.35)">
  <div class="a" style="left:6px;top:7px;width:34px;height:3px;background:repeating-linear-gradient(to right,#888 0 2px,transparent 2px 4px)"></div>
  <div class="a" style="left:0;bottom:0;width:45px;height:10px;border-radius:0 0 3px 3px;background:linear-gradient(to right,#B8B6CE 0%,#A8A6C2 60%,#9A98B8 100%)"><svg style="left:35px;top:1px" width="8" height="8" viewBox="0 0 8 8"><path d="M0.5 0V6" stroke="#000"/><path d="M1.5 0V7" stroke="#fff"/><path d="M3 0.5L6.5 3.5L3 6.5Z" fill="#000"/><path d="M3 7L7 4" stroke="#fff"/></svg></div>
</div>
<div class="a" style="left:1107px;top:125px;width:40px;height:39px;border:1px solid #4A4878;background:linear-gradient(to bottom,#FCD8A8,#F8B060)"></div>
<svg style="left:1111px;top:128px" width="32" height="33" viewBox="0 0 32 33" shape-rendering="crispEdges"><rect x="0" y="0" width="32" height="12" fill="url(#sky)"/><rect x="0" y="12" width="32" height="9" fill="#8A7A00"/><rect x="0" y="21" width="32" height="6" fill="#8A0A0A"/><rect x="0" y="27" width="32" height="6" fill="#8A7A00"/><path d="M6.5 4.5H10.5V8.5H13.5V11.5H3.5V8.5H6.5Z" fill="#ccc" stroke="#111" stroke-width="1.2"/><path d="M21.5 4.5H25.5V8.5H28.5V11.5H18.5V8.5H21.5Z" fill="#ccc" stroke="#111" stroke-width="1.2"/></svg>
<svg style="left:1111px;top:168px" width="32" height="33" viewBox="0 0 32 33" shape-rendering="crispEdges"><rect x="0" y="0" width="32" height="7" fill="url(#sky)"/><rect x="0" y="7" width="32" height="26" fill="#108010"/><rect x="0" y="19" width="32" height="6" fill="#8A0A0A"/><rect x="13.5" y="3.5" width="5" height="27" fill="#ccc" stroke="#111" stroke-width="1.2"/></svg>
<svg style="left:1111px;top:208px" width="32" height="33" viewBox="0 0 32 33" shape-rendering="crispEdges"><rect x="0" y="0" width="32" height="13" fill="url(#sky)"/><rect x="0" y="13" width="32" height="8" fill="#F8F800"/><rect x="0" y="21" width="32" height="6" fill="#8A0A0A"/><rect x="0" y="27" width="32" height="6" fill="#108010"/><path d="M8.5 5.5H23.5L28.5 13.5H3.5Z" fill="#ccc" stroke="#111" stroke-width="1.2" shape-rendering="auto"/></svg>
<!-- bottom dock bg -->

<!-- bottom toolbar 1 -->
<div class="tb" style="left:12px;top:784px;width:312px;height:32px"><div class="grip"></div><div class="sep" style="left:155px"></div><div class="cap"><i></i><b></b></div></div>
<svg style="left:0;top:0" width="1" height="1">
<defs>
<linearGradient id="hdl" x1="0" y1="1" x2="1" y2="0"><stop offset="0" stop-color="#D87810"/><stop offset=".5" stop-color="#F8C060"/><stop offset="1" stop-color="#E89020"/></linearGradient>
<radialGradient id="lens" cx=".4" cy=".35" r=".7"><stop offset="0" stop-color="#fff"/><stop offset="1" stop-color="#B8E4F8"/></radialGradient>
<linearGradient id="arr" x1="0" y1="0" x2="1" y2="1"><stop offset="0" stop-color="#60D0FF"/><stop offset=".6" stop-color="#1878E0"/><stop offset="1" stop-color="#0830A0"/></linearGradient>

</defs></svg>
<svg style="left:25px;top:790px" width="20" height="20" viewBox="0 0 20 20"><path d="M2.5 17.5L8 12" stroke="url(#hdl)" stroke-width="3.4" stroke-linecap="round"/><circle cx="12.5" cy="7.5" r="6" fill="url(#lens)" stroke="#111" stroke-width="1.5"/><path d="M12.5 4V11M9 7.5H16" stroke="#111" stroke-width="1.5"/></svg>
<svg style="left:53px;top:790px" width="20" height="20" viewBox="0 0 20 20"><path d="M2.5 17.5L8 12" stroke="url(#hdl)" stroke-width="3.4" stroke-linecap="round"/><circle cx="12.5" cy="7.5" r="6" fill="url(#lens)" stroke="#111" stroke-width="1.5"/><path d="M9 7.5H16" stroke="#111" stroke-width="1.8"/></svg>
<svg style="left:81px;top:790px" width="20" height="20" viewBox="0 0 20 20"><path d="M2.5 17.5L8 12" stroke="url(#hdl)" stroke-width="3.4" stroke-linecap="round"/><circle cx="12.5" cy="7.5" r="6" fill="url(#lens)" stroke="#111" stroke-width="1.5"/><rect x="10" y="5" width="5" height="5" fill="none" stroke="#111" stroke-width="1.3"/></svg>
<svg style="left:109px;top:790px" width="20" height="20" viewBox="0 0 20 20"><path d="M2.5 17.5L8 12" stroke="url(#hdl)" stroke-width="3.4" stroke-linecap="round"/><circle cx="12.5" cy="7.5" r="6" fill="url(#lens)" stroke="#111" stroke-width="1.5"/><circle cx="12.5" cy="7.5" r="3" fill="none" stroke="#111" stroke-width="1.2"/><path d="M12.5 3V12M8 7.5H17" stroke="#111" stroke-width="1.2"/></svg>
<svg style="left:136px;top:790px" width="21" height="20" viewBox="0 0 21 20"><path d="M3.5 17.5L9 12" stroke="url(#hdl)" stroke-width="3.4" stroke-linecap="round"/><circle cx="13.5" cy="7.5" r="6" fill="url(#lens)" stroke="#111" stroke-width="1.5"/><path d="M0 3H6M3 0V6" stroke="#111" stroke-width="1.5"/><path d="M13 17H20" stroke="#111" stroke-width="1.8"/></svg>
<svg style="left:176px;top:791px" width="20" height="20" viewBox="0 0 20 20"><path d="M9 6.5H19V13.5H9Z" fill="#1434C8"/><path d="M10 0.5V19.5L0 10Z" fill="#38B8F4"/><path d="M4 10L10 4V16Z" fill="#68D8FC" opacity=".7"/><path d="M10 0.5V19.5" stroke="#0A2080" stroke-width="1.2"/></svg>
<svg style="left:203px;top:791px" width="20" height="20" viewBox="0 0 20 20"><path d="M1 6.5H11V13.5H1Z" fill="#1434C8"/><path d="M10 0.5V19.5L20 10Z" fill="#38B8F4"/><path d="M16 10L10 4V16Z" fill="#68D8FC" opacity=".7"/><path d="M10 0.5V19.5" stroke="#0A2080" stroke-width="1.2"/></svg>
<svg style="left:231px;top:791px" width="21" height="20" viewBox="0 0 21 20"><path d="M7 9H14V20H7Z" fill="#1434C8"/><path d="M0 10H21L10.5 0Z" fill="#38B8F4"/><path d="M10.5 3L5 9H16Z" fill="#68D8FC" opacity=".7"/><path d="M0 10H21" stroke="#0A2080" stroke-width="1.2"/></svg>
<svg style="left:258px;top:791px" width="21" height="20" viewBox="0 0 21 20"><path d="M7 0H14V11H7Z" fill="#1434C8"/><path d="M0 9.5H21L10.5 20Z" fill="#38B8F4"/><path d="M10.5 17L5 11H16Z" fill="#68D8FC" opacity=".7"/><path d="M0 9.5H21" stroke="#0A2080" stroke-width="1.2"/></svg>
<svg style="left:288px;top:791px" width="18" height="19" viewBox="0 0 18 19"><path d="M4 10V4Q4 2.5 5.3 2.5Q6.5 2.5 6.5 4V8V2Q6.5 0.8 7.8 0.8Q9 0.8 9 2V8V2.5Q9 1.3 10.3 1.3Q11.5 1.3 11.5 2.5V8.5V4Q11.5 2.8 12.8 2.8Q14 2.8 14 4V12Q14 18 8.5 18Q5 18 3 14L0.8 10.5Q0.3 9.2 1.5 8.8Q2.5 8.5 3.3 9.6Z" fill="#fff" stroke="#555" stroke-width="1"/></svg>
<!-- bottom toolbar 2 -->
<div class="tb" style="left:327px;top:784px;width:305px;height:32px"><div class="grip"></div><div class="sep" style="left:99px"></div><div class="sep" style="left:137px"></div><div class="sep" style="left:231px"></div><div class="cap"><i></i><b></b></div></div>
<svg style="left:344px;top:792px" width="18" height="18" viewBox="0 0 18 18"><path d="M0.5 0.5H8L11 3.5V16.5H0.5Z" fill="#fff" stroke="#999"/><path d="M3 4V12M3 8H7" stroke="#888"/><path d="M12 13.5L16.5 17" stroke="#E89020" stroke-width="2.6" stroke-linecap="round"/><circle cx="9.5" cy="10.5" r="4" fill="#C8ECF8" stroke="#555" stroke-width="1.2"/></svg>
<div class="t" style="left:368px;top:791px;font-family:'Liberation Mono';font-weight:bold;font-size:8px;color:#C01010;letter-spacing:-.5px">DPZ</div>
<svg style="left:370px;top:798px" width="18" height="12" viewBox="0 0 18 12"><path d="M3 0V5H6" stroke="#C01010" stroke-width="1.4" fill="none"/><path d="M6 3V8H9V4" stroke="#20A020" stroke-width="1.4" fill="none"/><path d="M9 6V11H13V5" stroke="#111" stroke-width="1.4" fill="none"/></svg>
<svg style="left:397px;top:792px" width="18" height="18" viewBox="0 0 18 18"><rect x="3" y="1" width="14" height="16" fill="#fff" stroke="#ccc"/><path d="M5 1V8H9" stroke="#C01010" stroke-width="1.6" fill="none"/><path d="M8 5V13H12V6" stroke="#20A020" stroke-width="1.4" fill="none"/><path d="M15 4V17H9" stroke="#111" stroke-width="1.4" fill="none"/></svg>
<div class="t" style="left:434px;top:793px;font-family:'Liberation Sans';font-weight:bold;font-size:9px;color:#111;letter-spacing:-.4px">DXF</div>
<svg style="left:434px;top:802px" width="21" height="8" viewBox="0 0 21 8"><path d="M0 0H21V2H0Z" fill="#E82020"/><path d="M1 3.5H20V5H1Z" fill="#E82020"/><path d="M4 6H17L10.5 8Z" fill="#E82020"/></svg>
<div class="t" style="left:473px;top:790px;font-family:'Liberation Serif';font-weight:bold;font-size:22px;color:#1020E8">T</div>
<svg style="left:499px;top:791px" width="20" height="19" viewBox="0 0 20 19"><text x="0" y="9" font-family="Liberation Sans" font-style="italic" font-size="10" fill="#E82020">A</text><text x="6" y="13" font-family="Liberation Sans" font-style="italic" font-size="10" fill="#1020E8">B</text><text x="11" y="18" font-family="Liberation Sans" font-size="10" fill="#111">C</text></svg>
<svg style="left:529px;top:793px" width="18" height="17" viewBox="0 0 18 17" shape-rendering="crispEdges"><path d="M2 8Q6 2 12 6L9 12Q4 13 2 8Z" fill="#111" shape-rendering="auto"/><path d="M10 7L17 0L13 9Z" fill="#1040E0" shape-rendering="auto"/><path d="M8 5L11 8" stroke="#fff" stroke-width="1.5" shape-rendering="auto"/><rect x="2" y="13" width="5" height="4" fill="#E82020"/><rect x="7" y="13" width="5" height="4" fill="#fff"/><rect x="12" y="13" width="5" height="4" fill="#20A020"/></svg>
<svg style="left:565px;top:793px" width="22" height="15" viewBox="0 0 22 15"><path d="M2 2H20" stroke="#1030E0" stroke-width="1.2"/><path d="M0 2L4 0V4Z M22 2L18 0V4Z" fill="#1030E0"/><text x="5" y="14.5" font-family="Liberation Mono" font-weight="bold" font-size="11" fill="#20A020" letter-spacing="-1">50</text></svg>
<svg style="left:594px;top:791px" width="21" height="21" viewBox="0 0 21 21"><circle cx="10.5" cy="10.5" r="10" fill="url(#hg)"/><text x="5.5" y="16.5" font-family="Liberation Sans" font-weight="bold" font-size="15" fill="#fff">?</text></svg>
<!-- bottom toolbar 3 -->
<div class="tb" style="left:634px;top:784px;width:309px;height:32px"><div class="grip"></div><div class="sep" style="left:154px"></div><div class="cap"><i></i><b></b></div></div>
<div class="a" style="left:643px;top:787px;width:70px;height:27px;border:1px solid #F4F4F8;background:#4B5053"></div>
<div class="a" style="left:713px;top:787px;width:69px;height:27px;border:1px solid #F4F4F8;background:#4B5053"></div>
<div class="t" style="left:654px;top:795px;font-size:11.5px;letter-spacing:-0.1px;color:#111">X = 13,18</div>
<div class="t" style="left:725px;top:795px;font-size:11.5px;letter-spacing:-0.3px;color:#111">Y = -5,70</div>
<svg style="left:798px;top:792px" width="17" height="17" viewBox="0 0 17 17"><circle cx="8.5" cy="8.5" r="7.3" fill="none" stroke="#B01010" stroke-width="1.8"/><path d="M4.5 8.5L11.5 4.5V12.5Z" fill="#20B020" stroke="#108010" stroke-width=".8"/></svg>
<div class="btn" style="left:821px;top:787px;width:80px;height:28px"></div>
<div class="t" style="left:835px;top:796px;font-size:11.5px;letter-spacing:-0.35px;color:#111">Comb. n° 1</div>
<svg style="left:906px;top:792px" width="17" height="17" viewBox="0 0 17 17"><circle cx="8.5" cy="8.5" r="7.3" fill="none" stroke="#B01010" stroke-width="1.8"/><path d="M12.5 8.5L5.5 4.5V12.5Z" fill="#20B020" stroke="#108010" stroke-width=".8"/></svg>
<!-- status bars -->
<div class="a" style="left:7px;top:820px;width:1144px;height:2px;background:#F6F6FA"></div>
<div class="a" style="left:7px;top:822px;width:1144px;height:20px;background:#F0F0F0;border-top:1px solid #A0A090;border-left:1px solid #B0B0A0;border-right:1px solid #A0A0A0"></div>
<div class="a" style="left:7px;top:842px;width:1144px;height:22px;background:#FBFBE2;border-top:1px solid #A0A090;border-left:1px solid #B0B0A0"></div>
<div class="a" style="left:7px;top:845px;width:1143px;height:1px;background:#A0A090"></div>
<div class="a" style="left:1132px;top:846px;width:18px;height:18px;background:#F0F0F0"></div>
<div class="t" style="left:12px;top:849px;font-size:12px;letter-spacing:-0.2px;color:#111;white-space:pre;-webkit-text-stroke:0.25px #111">Aztec Informatica s.r.l. * Corso Umberto, 43 * 87050 Casole Bruzio (CS)  *  e-mail:   aztec@aztec.it  *  WEB: www.aztec.it</div>
<svg style="left:1136px;top:850px" width="14" height="14" viewBox="0 0 14 14"><path d="M1 13L13 1M6 13L13 6M11 13L13 11" stroke="#909088" stroke-width="1.3"/></svg>
<svg style="left:14px;top:864px" width="30" height="4" viewBox="0 0 30 4"><ellipse cx="15" cy="13" rx="12" ry="12" fill="#C8DCF0" stroke="#7E9CC0" stroke-width="1"/></svg>
</body></html>
